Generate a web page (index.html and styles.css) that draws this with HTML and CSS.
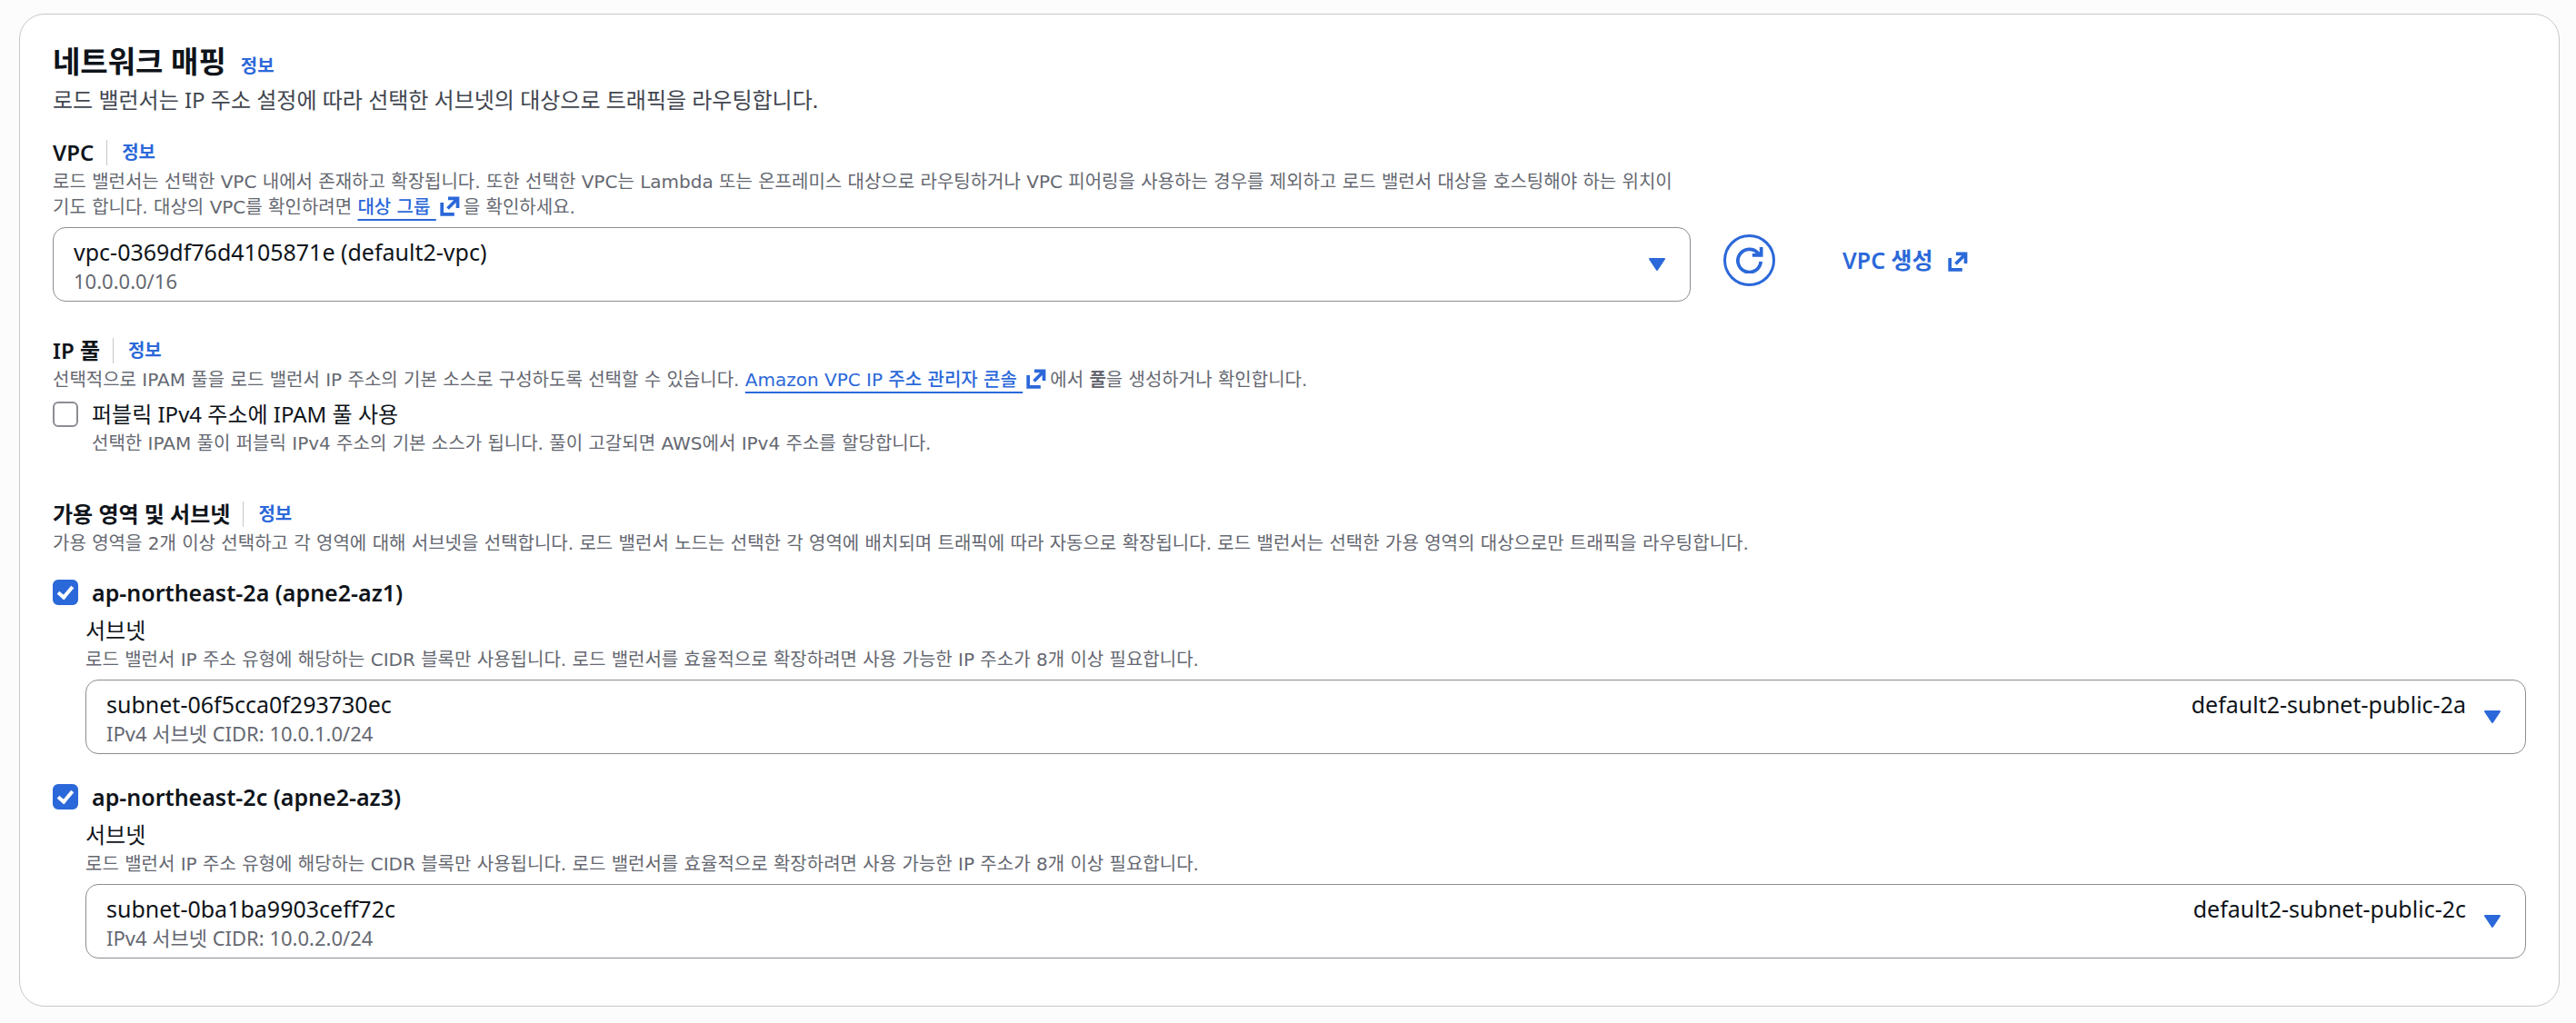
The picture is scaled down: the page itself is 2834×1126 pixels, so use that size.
FILE: index.html
```
<!DOCTYPE html>
<html lang="ko">
<head>
    <meta charset="UTF-8">
    <meta name="viewport" content="width=device-width, initial-scale=1.0">
    <title>네트워크 매핑</title>
    <link rel="stylesheet" href="styles.css">
</head>
<body>
    <svg class="sprite" aria-hidden="true">
        <symbol id="external" viewBox="0 0 16 16">
            <path d="M6.500 1.800H14.200V9.500M14 2 6.200 9.800M1.600 5V14.400H11.500" fill="none" stroke="currentColor" stroke-width="2.700"/>
        </symbol>
        <symbol id="caret" viewBox="0 0 20 16">
            <path d="M2 2h16L10 14z" fill="currentColor" stroke="currentColor" stroke-width="2" stroke-linejoin="round"/>
        </symbol>
        <symbol id="refresh" viewBox="0 0 32 32">
            <path d="M29 18A13.500 13.500 0 1 1 26 8.500L29 11" fill="none" stroke="currentColor" stroke-width="4"/>
            <path d="M29.500 1v9.500H19" fill="none" stroke="currentColor" stroke-width="4"/>
        </symbol>
    </svg>

    <main class="card">
        <header class="card-header">
            <div class="title-row">
                <h1>네트워크 매핑</h1>
                <a class="info" href="#">정보</a>
            </div>
            <p class="subtitle">로드 밸런서는 IP 주소 설정에 따라 선택한 서브넷의 대상으로 트래픽을 라우팅합니다.</p>
        </header>

        <section class="vpc">
            <div class="vpc-main">
                <div class="label-row">
                    <label class="label" for="vpc">VPC</label>
                    <a class="info divided" href="#">정보</a>
                </div>
                <p class="hint">로드 밸런서는 선택한 VPC 내에서 존재하고 확장됩니다. 또한 선택한 VPC는 Lambda 또는 온프레미스 대상으로 라우팅하거나 VPC 피어링을 사용하는 경우를 제외하고 로드 밸런서 대상을 호스팅해야 하는 위치이<br>기도 합니다. 대상의 VPC를 확인하려면 <a class="link" href="#">대상 그룹 </a><svg class="icon"><use href="#external"/></svg>을 확인하세요.</p>
                <div class="select">
                    <select id="vpc">
                        <option>vpc-0369df76d4105871e (default2-vpc)</option>
                    </select>
                    <span class="select-note">10.0.0.0/16</span>
                    <svg class="caret"><use href="#caret"/></svg>
                </div>
            </div>
            <div class="actions">
                <button class="refresh" type="button" aria-label="새로 고침"><svg><use href="#refresh"/></svg></button>
                <a class="create" href="#">VPC 생성 <svg class="icon"><use href="#external"/></svg></a>
            </div>
        </section>

        <section class="pool">
            <div class="label-row">
                <h2 class="label">IP 풀</h2>
                <a class="info divided" href="#">정보</a>
            </div>
            <p class="hint">선택적으로 IPAM 풀을 로드 밸런서 IP 주소의 기본 소스로 구성하도록 선택할 수 있습니다. <a class="link" href="#">Amazon VPC IP 주소 관리자 콘솔 </a><svg class="icon"><use href="#external"/></svg>에서 <b>풀</b>을 생성하거나 확인합니다.</p>
            <div class="check">
                <input type="checkbox" id="ipam">
                <label for="ipam">퍼블릭 IPv4 주소에 IPAM 풀 사용</label>
                <p class="hint">선택한 IPAM 풀이 퍼블릭 IPv4 주소의 기본 소스가 됩니다. 풀이 고갈되면 AWS에서 IPv4 주소를 할당합니다.</p>
            </div>
        </section>

        <section class="zones">
            <div class="label-row">
                <h2 class="label">가용 영역 및 서브넷</h2>
                <a class="info divided" href="#">정보</a>
            </div>
            <p class="hint">가용 영역을 2개 이상 선택하고 각 영역에 대해 서브넷을 선택합니다. 로드 밸런서 노드는 선택한 각 영역에 배치되며 트래픽에 따라 자동으로 확장됩니다. 로드 밸런서는 선택한 가용 영역의 대상으로만 트래픽을 라우팅합니다.</p>

            <div class="zone">
                <div class="check zone-name">
                    <input type="checkbox" id="az1" checked>
                    <label for="az1">ap-northeast-2a (apne2-az1)</label>
                </div>
                <div class="zone-body">
                    <label class="sub-label" for="subnet1">서브넷</label>
                    <p class="hint">로드 밸런서 IP 주소 유형에 해당하는 CIDR 블록만 사용됩니다. 로드 밸런서를 효율적으로 확장하려면 사용 가능한 IP 주소가 8개 이상 필요합니다.</p>
                    <div class="select">
                        <select id="subnet1">
                            <option>subnet-06f5cca0f293730ec</option>
                        </select>
                        <span class="select-note">IPv4 서브넷 CIDR: 10.0.1.0/24</span>
                        <span class="select-tag">default2-subnet-public-2a</span>
                        <svg class="caret"><use href="#caret"/></svg>
                    </div>
                </div>
            </div>

            <div class="zone">
                <div class="check zone-name">
                    <input type="checkbox" id="az3" checked>
                    <label for="az3">ap-northeast-2c (apne2-az3)</label>
                </div>
                <div class="zone-body">
                    <label class="sub-label" for="subnet3">서브넷</label>
                    <p class="hint">로드 밸런서 IP 주소 유형에 해당하는 CIDR 블록만 사용됩니다. 로드 밸런서를 효율적으로 확장하려면 사용 가능한 IP 주소가 8개 이상 필요합니다.</p>
                    <div class="select">
                        <select id="subnet3">
                            <option>subnet-0ba1ba9903ceff72c</option>
                        </select>
                        <span class="select-note">IPv4 서브넷 CIDR: 10.0.2.0/24</span>
                        <span class="select-tag">default2-subnet-public-2c</span>
                        <svg class="caret"><use href="#caret"/></svg>
                    </div>
                </div>
            </div>
        </section>
    </main>
</body>
</html>
```
FILE: styles.css
```
* {
    box-sizing: border-box;
}
body {
    margin: 0;
    padding: 15px 18px 18px 21px;
    font-family: "Noto Sans", "Noto Sans CJK KR", sans-serif;
    font-size: 24px;
    line-height: 32px;
    color: #0f141a;
    background-color: #fcfcfd;
}
h1, h2, p {
    margin: 0;
}
a {
    color: #2b68d9;
    text-decoration: none;
}
.sprite {
    display: none;
}
.card {
    padding: 28px 36px 52px;
    background-color: #fff;
    border: 1px solid #c6c6cd;
    border-radius: 28px;
}
.title-row {
    display: flex;
    align-items: baseline;
    gap: 16px;
}
h1 {
    font-size: 33px;
    line-height: 48px;
}
.info {
    font-size: 20px;
    line-height: 28px;
    font-weight: 600;
}
.subtitle {
    line-height: 36px;
    color: #424650;
}
.label-row {
    display: flex;
    align-items: center;
    height: 32px;
}
.label {
    font-size: 24px;
    line-height: 32px;
    font-weight: 600;
}
.divided {
    margin-left: 14px;
    padding-left: 16px;
    border-left: 1px solid #c6c6cd;
}
.hint {
    margin-top: 2px;
    font-family: "DejaVu Sans", "Noto Sans CJK KR", sans-serif;
    font-size: 20px;
    line-height: 28px;
    color: #656871;
}
.link {
    font-weight: 500;
    white-space: pre;
    text-decoration: underline 2px;
    text-underline-offset: 6px;
}
.icon {
    width: 22px;
    height: 22px;
    margin: 0 4px;
    vertical-align: -3px;
    color: #2b68d9;
}

/* VPC row, 8 of 12 columns for the field */
.vpc {
    display: grid;
    grid-template-columns: repeat(12, 1fr);
    column-gap: 36px;
    align-items: end;
    margin-top: 24px;
}
.vpc-main {
    grid-column: span 8;
}
.actions {
    grid-column: span 4;
    display: flex;
    align-items: center;
    gap: 74px;
    height: 92px;
}
.refresh {
    display: flex;
    align-items: center;
    justify-content: center;
    width: 57px;
    height: 57px;
    padding: 0;
    color: #2b68d9;
    background: none;
    border: 3px solid #2b68d9;
    border-radius: 50%;
    cursor: pointer;
}
.refresh svg {
    width: 30px;
    height: 30px;
}
.create {
    font-size: 25px;
    font-weight: 600;
}
.create .icon {
    margin-left: 10px;
}

/* Dropdown with a second line under the value */
.select {
    display: grid;
    margin-top: 8px;
}
.select > * {
    grid-area: 1 / 1;
}
.select select {
    width: 100%;
    height: 82px;
    padding: 10px 22px 38px;
    font: inherit;
    font-size: 25px;
    color: inherit;
    background-color: #fff;
    border: 1px solid #8c8c94;
    border-radius: 14px;
    appearance: none;
}
.select-note, .select-tag, .caret {
    pointer-events: none;
}
.select-note {
    align-self: end;
    padding: 0 23px 9px;
    font-size: 22px;
    line-height: 28px;
    color: #656871;
}
.select-tag {
    justify-self: end;
    padding: 11px 66px 0 0;
    font-size: 25px;
}
.caret {
    align-self: center;
    justify-self: end;
    width: 20px;
    height: 16px;
    margin-right: 27px;
    color: #2b68d9;
}

/* Checkboxes */
.check {
    display: grid;
    grid-template-columns: 28px 1fr;
    column-gap: 15px;
    align-items: center;
}
.check input {
    display: grid;
    place-items: center;
    width: 28px;
    height: 28px;
    margin: 0;
    background-color: #fff;
    border: 2px solid #8c8c94;
    border-radius: 6px;
    appearance: none;
}
.check input:checked {
    background-color: #2b68d9;
    border-color: #2b68d9;
}
.check input:checked::before {
    content: "";
    box-sizing: border-box;
    width: 10px;
    height: 17px;
    margin-bottom: 4px;
    border: solid #fff;
    border-width: 0 4px 4px 0;
    transform: rotate(40deg);
}
.check .hint {
    grid-column: 2;
}

.pool {
    margin-top: 38px;
}
.pool .check {
    margin-top: 8px;
}
.zones {
    margin-top: 48px;
}
.zone {
    margin-top: 24px;
}
.zone + .zone {
    margin-top: 31px;
}
.zone-name {
    font-size: 25px;
    font-weight: 600;
}
.zone-body {
    padding-left: 36px;
}
.sub-label {
    display: block;
    margin-top: 10px;
}
```
